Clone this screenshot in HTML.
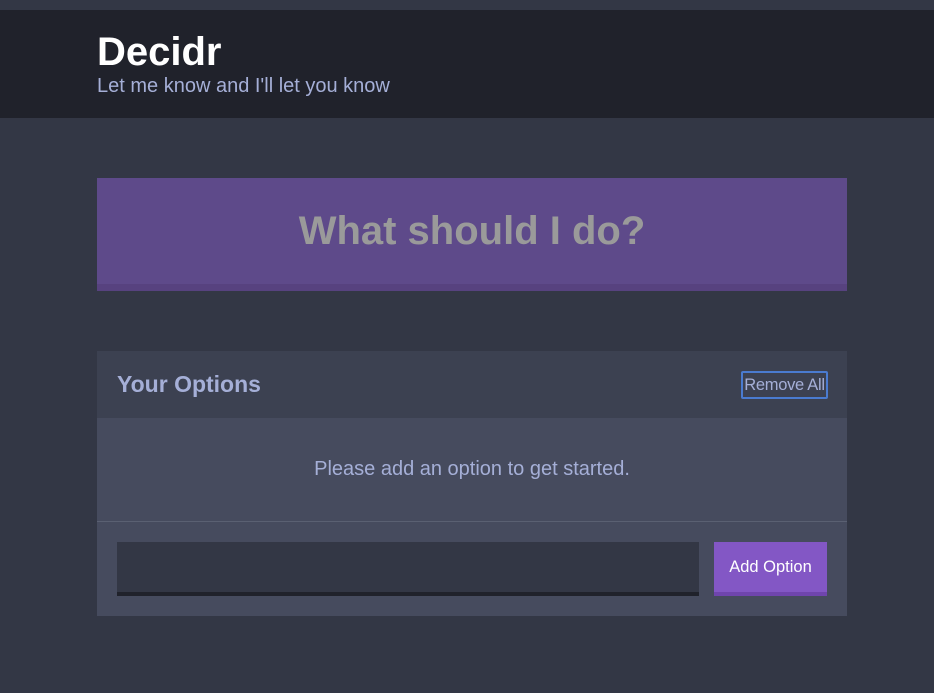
<!DOCTYPE html>
<html><head><style>
*{margin:0;padding:0;box-sizing:border-box}
body{width:934px;height:693px;background:#333745;font-family:Arial,"Liberation Sans",sans-serif;position:relative;overflow:hidden}
.hdr{position:absolute;top:10px;left:0;width:934px;height:108px;background:#20222b}
.t{position:absolute;left:97px;top:30px;font-size:40px;font-weight:bold;color:#fff;line-height:44px}
.s{position:absolute;left:97px;top:75px;font-size:20px;color:#a5afd7;line-height:22px}
.big{position:absolute;left:97px;top:178px;width:750px;height:113px;background:#5e4a8a;border-bottom:7px solid #57427f;color:#9a9a9a;font-size:40px;font-weight:bold;text-align:center;line-height:106px}
.wg{position:absolute;left:97px;top:351px;width:750px;height:265px;background:#464b5e}
.wh{height:67px;background:#3c4151;position:relative}
.wh h3{position:absolute;left:20px;top:20px;font-size:23px;color:#a5afd7}
.ra{position:absolute;left:644px;top:20px;width:87px;height:28px;border:2px solid #4a7bd0;border-radius:2px;color:#a5afd7;font-size:16.5px;line-height:24px;text-align:center;white-space:nowrap;letter-spacing:-0.3px}
.msg{position:absolute;top:107px;width:100%;text-align:center;color:#a5afd7;font-size:20px}
.ln{position:absolute;top:170px;left:0;width:100%;height:1px;background:#5a6072}
.in{position:absolute;left:20px;top:191px;width:582px;height:54px;background:#333745;border-bottom:4px solid #20222b}
.ab{position:absolute;left:617px;top:191px;width:113px;height:54px;background:#8357c5;border-bottom:4px solid #6f45ad;color:#fff;font-size:16.5px;text-align:center;line-height:50px}
</style></head><body>
<div class="hdr"></div>
<div class="t">Decidr</div>
<div class="s">Let me know and I'll let you know</div>
<div class="big">What should I do?</div>
<div class="wg">
<div class="wh"><h3>Your Options</h3><div class="ra">Remove All</div></div>
<div class="msg">Please add an option to get started.</div>
<div class="ln"></div>
<div class="in"></div>
<div class="ab">Add Option</div>
</div>
</body></html>
